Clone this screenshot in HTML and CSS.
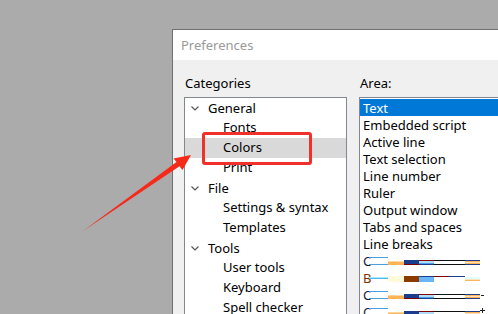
FILE: index.html
```html
<!DOCTYPE html>
<html lang="en">
<head>
    <meta charset="UTF-8">
    <meta name="viewport" content="width=device-width, initial-scale=1.0">
    <title>Preferences</title>
    <link rel="stylesheet" href="styles.css">
</head>
<body>

<div class="dialog">
    <div class="titlebar">Preferences</div>
    <div class="content">
        <div class="categories">
            <div class="label">Categories</div>
            <ul class="tree">
                <li class="group"><svg class="chevron" width="8" height="5" viewBox="0 0 8 5"><polyline points="0.5,0.5 4,4 7.5,0.5" fill="none" stroke="#555" stroke-width="1.2"/></svg>General</li>
                <li class="child">Fonts</li>
                <li class="child selected">Colors</li>
                <li class="child">Print</li>
                <li class="group"><svg class="chevron" width="8" height="5" viewBox="0 0 8 5"><polyline points="0.5,0.5 4,4 7.5,0.5" fill="none" stroke="#555" stroke-width="1.2"/></svg>File</li>
                <li class="child">Settings &amp; syntax</li>
                <li class="child">Templates</li>
                <li class="group"><svg class="chevron" width="8" height="5" viewBox="0 0 8 5"><polyline points="0.5,0.5 4,4 7.5,0.5" fill="none" stroke="#555" stroke-width="1.2"/></svg>Tools</li>
                <li class="child">User tools</li>
                <li class="child">Keyboard</li>
                <li class="child">Spell checker</li>
            </ul>
        </div>
        <div class="area">
            <div class="label">Area:</div>
            <ul class="list">
                <li class="active">Text</li>
                <li>Embedded script</li>
                <li>Active line</li>
                <li>Text selection</li>
                <li>Line number</li>
                <li>Ruler</li>
                <li>Output window</li>
                <li>Tabs and spaces</li>
                <li>Line breaks</li>
                <li class="sample"><span class="letter">C</span><svg width="120" height="17" viewBox="0 0 120 17">
                    <rect x="0" y="5" width="19" height="1" fill="#4a9fe0"/>
                    <rect x="0" y="12" width="19" height="1" fill="#4a9fe0"/>
                    <rect x="19" y="9" width="16" height="1" fill="#ffd7a0"/>
                    <rect x="19" y="10" width="16" height="3" fill="#ffb458"/>
                    <rect x="35" y="8" width="15" height="4" fill="#1c3c8c"/>
                    <rect x="35" y="12" width="15" height="1" fill="#800000"/>
                    <rect x="50" y="8" width="15" height="1" fill="#800000"/>
                    <rect x="50" y="9" width="15" height="2" fill="#b0dcf8"/>
                    <rect x="50" y="11" width="15" height="1" fill="#4aa0e8"/>
                    <rect x="50" y="12" width="15" height="1" fill="#1c3c8c"/>
                    <rect x="65" y="8" width="31" height="1" fill="#111"/>
                    <rect x="65" y="12" width="31" height="1" fill="#111"/>
                    <rect x="96" y="8" width="15" height="1" fill="#1c3c8c"/>
                    <rect x="96" y="9" width="15" height="1" fill="#ffb458"/>
                    <rect x="96" y="10" width="15" height="1" fill="#ffe0b8"/>
                    <rect x="96" y="11" width="15" height="1" fill="#ffb458"/>
                    <rect x="96" y="12" width="15" height="1" fill="#1c3c8c"/>
                </svg></li>
                <li class="sample"><span class="letter bold">B</span><svg width="120" height="17" viewBox="0 0 120 17">
                    <rect x="0" y="8" width="19" height="1" fill="#a8ecff"/>
                    <rect x="0" y="9" width="19" height="1" fill="#50b8f0"/>
                    <rect x="19" y="7" width="16" height="6" fill="#fffbd8"/>
                    <rect x="35" y="7" width="15" height="6" fill="#8b3a00"/>
                    <rect x="50" y="7" width="15" height="1" fill="#1c3c8c"/>
                    <rect x="50" y="8" width="15" height="5" fill="#6ab4f8"/>
                    <rect x="65" y="7" width="15" height="1" fill="#800000"/>
                    <rect x="80" y="7" width="16" height="1" fill="#1c3c8c"/>
                    <rect x="96" y="8" width="15" height="2" fill="#e0ffff"/>
                    <rect x="96" y="10" width="15" height="1" fill="#ffe0b8"/>
                    <rect x="96" y="11" width="15" height="1" fill="#ffb458"/>
                </svg></li>
                <li class="sample"><span class="letter">C</span><svg width="120" height="17" viewBox="0 0 120 17">
                    <rect x="0" y="5" width="19" height="1" fill="#4a9fe0"/>
                    <rect x="0" y="12" width="19" height="1" fill="#4a9fe0"/>
                    <rect x="19" y="9" width="16" height="1" fill="#ffd7a0"/>
                    <rect x="19" y="10" width="16" height="3" fill="#ffb458"/>
                    <rect x="35" y="8" width="15" height="4" fill="#1c3c8c"/>
                    <rect x="35" y="12" width="15" height="1" fill="#800000"/>
                    <rect x="50" y="8" width="15" height="1" fill="#800000"/>
                    <rect x="50" y="9" width="15" height="2" fill="#b0dcf8"/>
                    <rect x="50" y="11" width="15" height="1" fill="#4aa0e8"/>
                    <rect x="50" y="12" width="15" height="1" fill="#1c3c8c"/>
                    <rect x="65" y="8" width="31" height="1" fill="#111"/>
                    <rect x="65" y="12" width="31" height="1" fill="#111"/>
                    <rect x="96" y="8" width="15" height="1" fill="#1c3c8c"/>
                    <rect x="96" y="9" width="15" height="1" fill="#ffb458"/>
                    <rect x="96" y="10" width="15" height="1" fill="#ffe0b8"/>
                    <rect x="96" y="11" width="15" height="1" fill="#ffb458"/>
                    <rect x="96" y="12" width="15" height="1" fill="#1c3c8c"/>
                    <rect x="112" y="9" width="3" height="1" fill="#222"/>
                </svg></li>
                <li class="sample"><span class="letter">C</span><svg width="120" height="17" viewBox="0 0 120 17">
                    <rect x="0" y="5" width="19" height="1" fill="#4a9fe0"/>
                    <rect x="0" y="12" width="19" height="1" fill="#4a9fe0"/>
                    <rect x="19" y="9" width="16" height="1" fill="#ffd7a0"/>
                    <rect x="19" y="10" width="16" height="3" fill="#ffb458"/>
                    <rect x="35" y="8" width="15" height="4" fill="#1c3c8c"/>
                    <rect x="35" y="12" width="15" height="1" fill="#800000"/>
                    <rect x="50" y="8" width="15" height="1" fill="#800000"/>
                    <rect x="50" y="9" width="15" height="2" fill="#b0dcf8"/>
                    <rect x="50" y="11" width="15" height="1" fill="#4aa0e8"/>
                    <rect x="65" y="8" width="31" height="1" fill="#111"/>
                    <rect x="96" y="8" width="15" height="1" fill="#1c3c8c"/>
                    <rect x="96" y="9" width="15" height="1" fill="#ffb458"/>
                    <rect x="96" y="10" width="15" height="1" fill="#ffe0b8"/>
                    <rect x="113" y="5" width="1" height="5" fill="#222"/>
                    <rect x="111" y="7" width="5" height="1" fill="#222"/>
                </svg></li>
            </ul>
        </div>
    </div>
</div>

<div class="callout"></div>
<svg class="arrow" width="498" height="314" viewBox="0 0 498 314">
    <polygon points="191,155 173.5,158.5 176.5,162 83,231 179.5,166.2 182.5,170" fill="#f52a1a"/>
</svg>

</body>
</html>
```

FILE: styles.css
```css
body {
    margin: 0;
    width: 498px;
    height: 314px;
    overflow: hidden;
    background: #ababab;
    font-family: "Noto Sans", "Liberation Sans", sans-serif;
    font-size: 13px;
    color: #000;
    position: relative;
}
.dialog {
    margin: 29px 0 0 172px;
    width: 360px;
    height: 320px;
    border: 1px solid #707070;
    background: #f0f0f0;
}
.titlebar {
    height: 30px;
    line-height: 30px;
    padding-left: 8px;
    background: #fff;
    color: #9a9a9a;
}
.content {
    display: flex;
    gap: 12px;
    padding: 13px 0 0 11px;
}
.label {
    height: 20px;
    line-height: 20px;
    margin: 0 0 4px 1px;
}
.categories {
    width: 163px;
}
.area {
    flex: 1;
}
.tree,
.list {
    list-style: none;
    margin: 0;
    padding: 0;
    background: #fff;
    border: 1px solid #828790;
    height: 240px;
}
.tree li {
    height: 20px;
    line-height: 18px;
    white-space: nowrap;
}
.tree .group {
    display: flex;
    align-items: center;
    padding-left: 6px;
}
.chevron {
    margin-right: 9px;
    margin-top: 1px;
}
.tree .child {
    padding-left: 38px;
}
.tree .selected {
    background: #d9d9d9;
}
.list {
    padding-top: 1px;
}
.list li {
    box-sizing: border-box;
    height: 17px;
    padding: 2px 0 0 3px;
    line-height: 15px;
    white-space: nowrap;
}
.list .active {
    background: #0078d7;
    color: #fff;
}
.list .sample {
    display: flex;
    align-items: center;
    padding-top: 0;
}
.letter {
    width: 6px;
    line-height: 15px;
    margin-top: 1px;
    color: #1a1a40;
}
.letter.bold {
    color: #7a3000;
}
.callout {
    position: absolute;
    left: 202px;
    top: 132px;
    width: 110px;
    height: 33px;
    box-sizing: border-box;
    border: 3px solid #f0302a;
    border-radius: 3px;
}
.arrow {
    position: absolute;
    left: 0;
    top: 0;
}
```
